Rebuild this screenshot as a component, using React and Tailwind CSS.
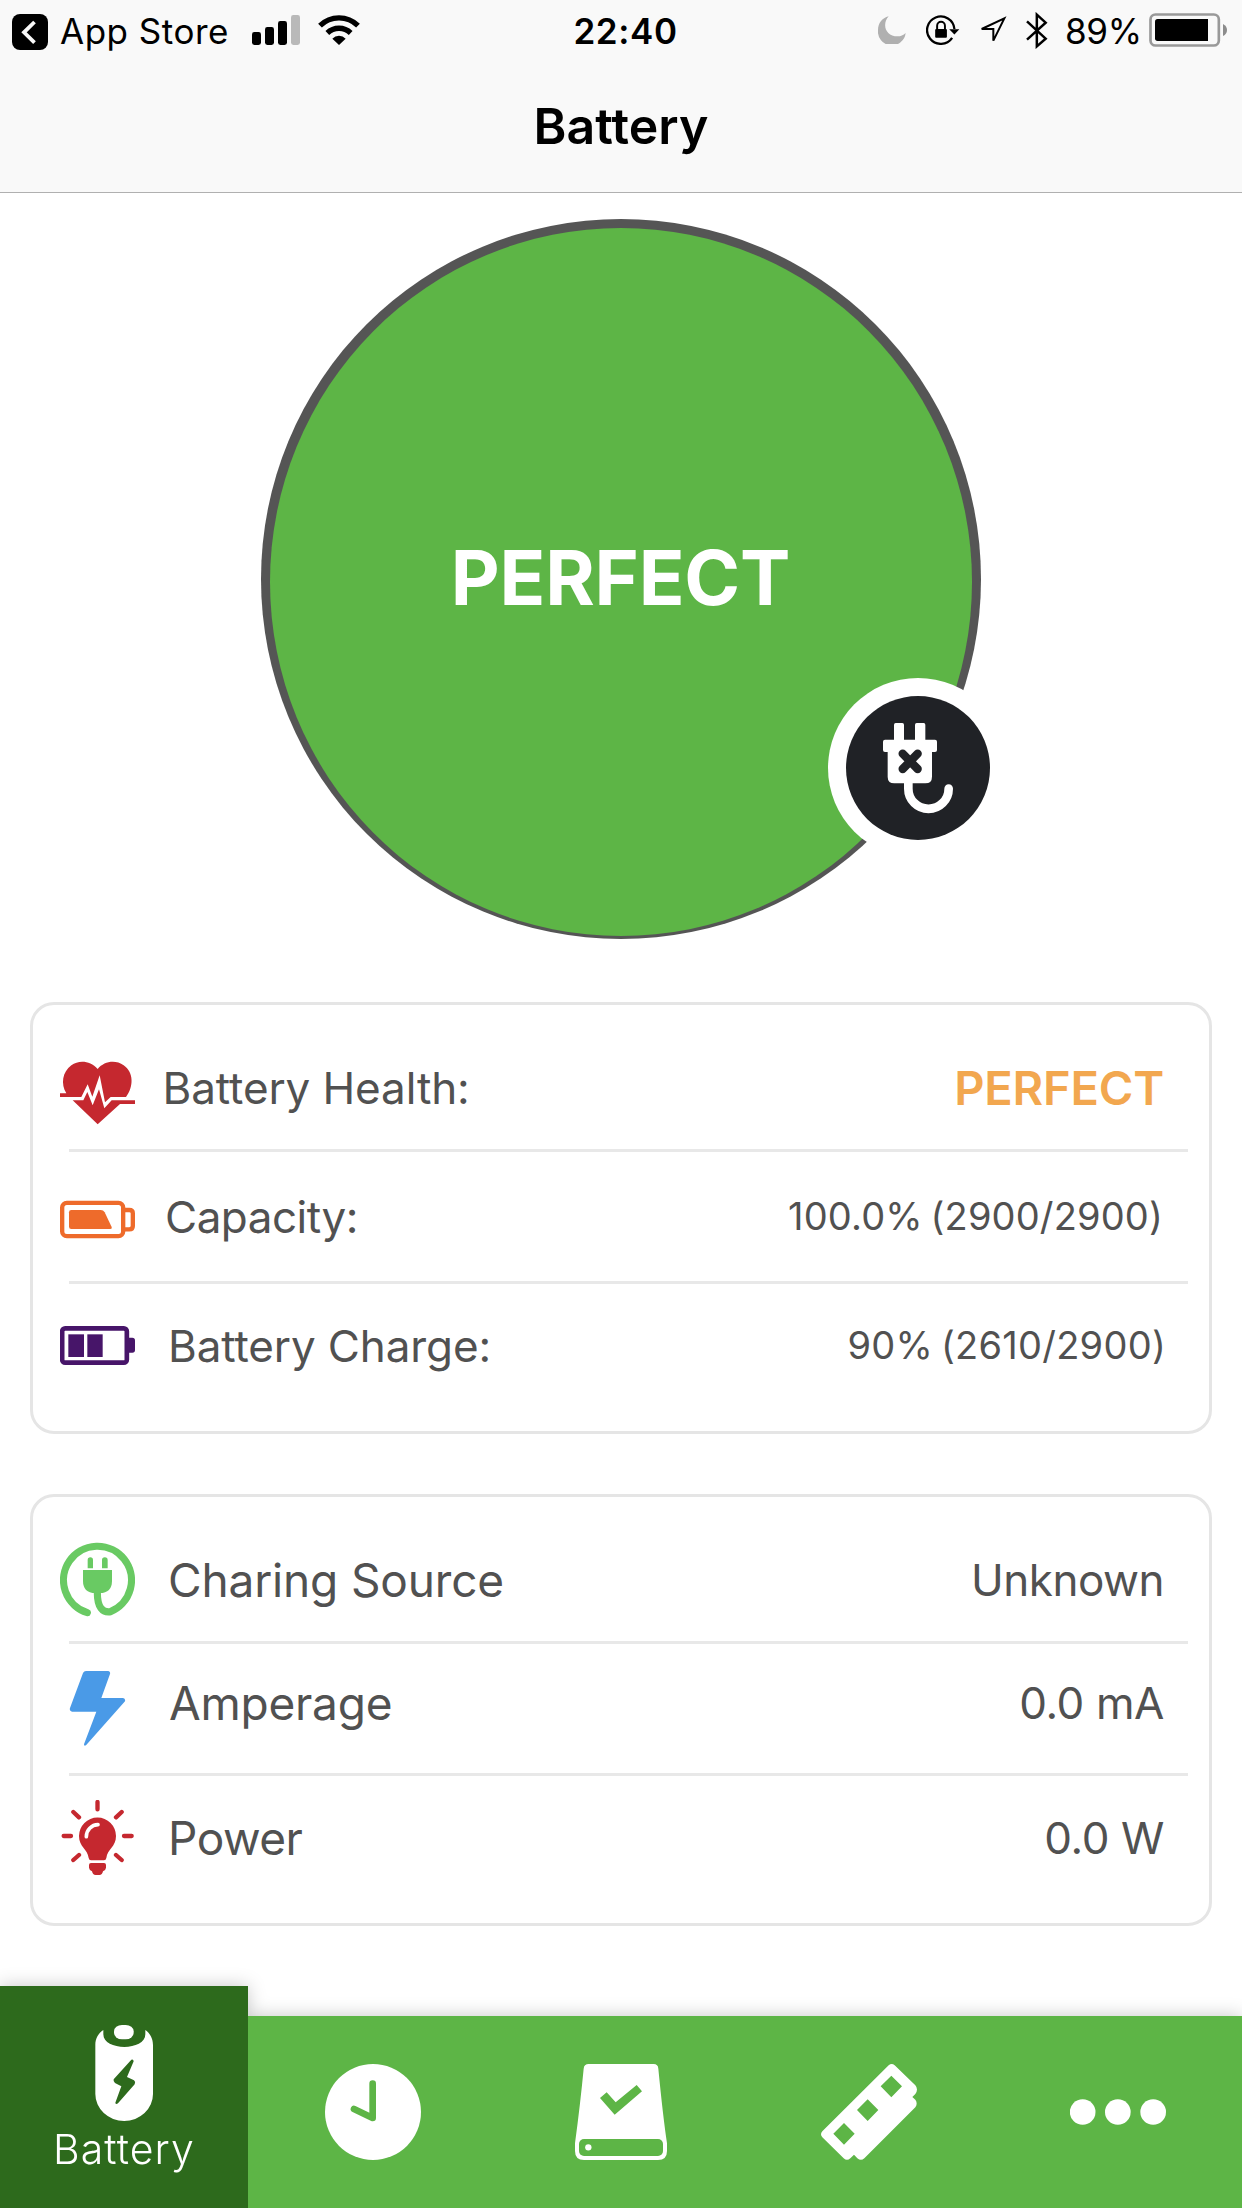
function BackBadge() {
  return (
    <svg className="ml-3 mt-[14px] h-9 w-9" viewBox="0 0 36 36">
      <rect width="36" height="36" rx="8" fill="#000" />
      <path d="M22.5 8 L12 18.3 L22.5 28.6" fill="none" stroke="#f9f9f9" strokeWidth="3.8" />
    </svg>
  );
}

function Signal() {
  return (
    <svg className="mt-[15px] h-[30px] w-12" viewBox="0 0 48 30">
      <rect x="0" y="17" width="9" height="13" rx="2.4" />
      <rect x="13" y="12" width="9" height="18" rx="2.4" />
      <rect x="26" y="6" width="9" height="24" rx="2.4" />
      <rect x="39" y="0" width="9" height="30" rx="2.4" fill="#b9b9b9" />
    </svg>
  );
}

function Wifi() {
  return (
    <svg className="mt-[15px] h-[30px] w-[42px]" viewBox="954 45 126 90">
      <g fill="none" stroke="#000" strokeWidth="16">
        <path d="M960 77 A81 81 0 0 1 1074 77" />
        <path d="M982 99 A50 50 0 0 1 1052 99" />
      </g>
      <path d="M1017 135 L997 116 A28 28 0 0 1 1037 116Z" />
    </svg>
  );
}

function Moon() {
  return (
    <svg className="mt-[15.5px] h-7 w-7" viewBox="176 47 84 84">
      <path d="M208 48 C188 53 176 69 176 89 A41 41 0 0 0 259 98 C252 105 244 108 235 108 C198 108 187 72 208 48Z" fill="#b0b0b0" />
    </svg>
  );
}

function RotationLock() {
  return (
    <svg className="mt-[15px] h-[30px] w-[34px]" viewBox="318 44 102 92">
      <path d="M397 114 A42 42 0 1 1 404 87" fill="none" stroke="#000" strokeWidth="7" />
      <path d="M388 88 H419 L404 104Z" />
      <rect x="345" y="87" width="36" height="27" rx="3" />
      <path d="M351 90 V77 a12 12 0 0 1 24 0 V90" fill="none" stroke="#000" strokeWidth="6" />
    </svg>
  );
}

function LocationArrow() {
  return (
    <svg className="mt-[15.5px] h-[30px] w-[30px]" viewBox="476 47 90 90">
      <path d="M558 54 L525 121 V86 H490Z" fill="none" stroke="#000" strokeWidth="6" />
    </svg>
  );
}

function Bluetooth() {
  return (
    <svg className="mt-3 h-[37px] w-[22px]" viewBox="617 36 66 111">
      <path d="M620 64 L676 116 L649.500 139 V44 L676 68 L620 119" fill="none" stroke="#000" strokeWidth="7.500" />
    </svg>
  );
}

function BatteryStatus() {
  return (
    <svg className="mt-[13px] h-[34px] w-[78px]" viewBox="987 39 234 102">
      <rect x="991.500" y="43.500" width="205" height="93" rx="15" fill="none" stroke="#999" strokeWidth="8" />
      <path d="M1013 57 H1164 V123 H1013 Q1005 123 1005 115 V65 Q1005 57 1013 57Z" />
      <path d="M1209 72 q12 6 12 18 t-12 18Z" fill="#8c8c8c" />
    </svg>
  );
}

function UnpluggedIcon() {
  return (
    <svg className="h-36 w-36" viewBox="138 138 432 432">
      <circle cx="354" cy="354" r="216" fill="#202226" />
      <g fill="#fff">
        <rect x="282" y="219" width="30" height="60" rx="5" />
        <rect x="345" y="219" width="31" height="60" rx="5" />
        <rect x="249" y="269" width="162" height="37" rx="6" />
        <path d="M263 296 H396 V380 Q396 400 376 400 H283 Q263 400 263 380Z" />
      </g>
      <path d="M325 390 V416 A60.500 60.500 0 0 0 446 416" fill="none" stroke="#fff" strokeWidth="26" strokeLinecap="round" />
      <path d="M308 311 L353 357 M353 311 L308 357" stroke="#202226" strokeWidth="25" strokeLinecap="round" />
    </svg>
  );
}

function HeartPulse({ className }) {
  return (
    <svg className={className} viewBox="120 195 225 225" fill="#c5282f">
      <path d="M233 237 C211 212 177 209 154 226 C127 246 122 282 139 310 H120 V321 H184 L203 283 L217 320 L239 256 L255 337 L272 321 H318 C341 291 342 247 311 226 C286 208 252 214 233 237Z" />
      <path d="M158 331 H190 L202 306 L218 346 L237 298 L253 355 L275 331 H345 V342 H300 L233 403Z" />
    </svg>
  );
}

function CapacityIcon({ className }) {
  return (
    <svg className={className} viewBox="120 576 225 225">
      <g fill="none" stroke="#ee6b2b" strokeWidth="13">
        <rect x="126.500" y="638.500" width="183" height="100" rx="14" />
        <path d="M310 660 H328 Q338.500 660 338.500 670 V708 Q338.500 718 328 718 H310" />
      </g>
      <path d="M154 660 H242 Q250 660 254 667 L275 711 Q277 717 271 717 H154 Q147 717 147 710 V667 Q147 660 154 660Z" fill="#ee6b2b" />
    </svg>
  );
}

function ChargeIcon({ className }) {
  return (
    <svg className={className} viewBox="120 954 225 225" fill="#471569">
      <rect x="126.500" y="1015" width="194" height="103" rx="9" fill="none" stroke="#471569" strokeWidth="14" />
      <rect x="145" y="1033" width="47" height="68" />
      <rect x="202" y="1033" width="46" height="68" />
      <path d="M324 1043 H337 Q345 1043 345 1051 V1080 Q345 1088 337 1088 H324Z" />
    </svg>
  );
}

function SourceIcon({ className }) {
  return (
    <svg className={className} viewBox="120 186 225 225" fill="#69ca63">
      <path d="M202 398 A102 102 0 1 1 270 395.500 C248 398 232 382 232 338" fill="none" stroke="#69ca63" strokeWidth="21.500" strokeLinecap="round" />
      <path d="M203 265 V240 a8 8 0 0 1 16 0 V265Z M246 265 V240 a8.500 8 0 0 1 17 0 V265Z" />
      <path d="M189 270 H276 V302 Q276 339 239 339 H226 Q189 339 189 302Z" />
    </svg>
  );
}

function BoltIcon({ className }) {
  return (
    <svg className={className} viewBox="120 573 225 225">
      <path d="M198 573 H265 Q272 575 270 582 L244 654 H309 Q317 656 315 664 L198 796 Q192 800 192 793 L229 695 H156 Q147 693 150 684 L189 579 Q192 573 198 573Z" fill="#4a9ae7" />
    </svg>
  );
}

function BulbIcon({ className }) {
  return (
    <svg className={className} viewBox="120 960 225 225" fill="#c5282f">
      <g stroke="#c5282f" strokeWidth="13" strokeLinecap="round">
        <path d="M232.500 966 V988 M131 1068 H153 M312 1068 H335 M160 996 L177 1012 M305 996 L288 1012 M160 1140 L177 1125 M305 1140 L288 1125" />
      </g>
      <path d="M177 1068 A55.500 55.500 0 0 1 288 1068 C288 1101 262 1107 259 1134 Q258 1141 252 1141 H213 Q207 1141 206 1134 C203 1107 177 1101 177 1068Z" />
      <path d="M199 1070 A36 36 0 0 1 234 1034" fill="none" stroke="#fff" strokeWidth="11" strokeLinecap="round" />
      <path d="M213 1149 H252 Q258 1149 258 1155 V1163 Q257 1171 249 1174 Q247 1185 238 1185 H227 Q218 1185 216 1174 Q208 1171 207 1163 V1155 Q207 1149 213 1149Z" />
    </svg>
  );
}

function Row({ icon, label, value, last }) {
  return (
    <>
      <div className={"flex items-start pl-[27px] " + (last ? "h-[147px]" : label.rowHeight)}>
        {icon}
        <span className={"whitespace-nowrap leading-[60px] text-[#515151] " + label.className}>{label.text}</span>
        <span className={"ml-auto whitespace-nowrap leading-[60px] " + value.className}>{value.text}</span>
      </div>
      {!last && <div className="ml-9 mr-[21px] h-[3px] bg-[#e8e8e8]" />}
    </>
  );
}

function Card({ children, className }) {
  return <section className={"mx-[30px] h-[432px] rounded-[24px] border-[3px] border-[#e5e5e5] bg-white " + className}>{children}</section>;
}

function Tab({ children }) {
  return <div className="flex h-48 flex-1 items-center justify-center bg-[#5db546]">{children}</div>;
}

export default function App() {
  return (
    <div className="flex h-[2208px] w-[1242px] flex-col overflow-hidden bg-white font-['Inter','Liberation_Sans',sans-serif]">
      <header className="h-[193px] border-b border-[#b0b0b0] bg-[#f9f9f9] text-black">
        <div className="grid h-[63px] grid-cols-[1fr_auto_1fr] items-start">
          <div className="flex items-start">
            <BackBadge />
            <span className="ml-[12px] w-[192px] whitespace-nowrap text-[35px] leading-[63px] tracking-[0.5px]">App Store</span>
            <Signal />
            <div className="ml-[18px] flex">
              <Wifi />
            </div>
          </div>
          <span className="mr-[-9px] text-[35px] font-semibold leading-[63px] tracking-[0.6px]">22:40</span>
          <div className="flex items-start justify-end pr-[15px]">
            <Moon />
            <div className="ml-[20px] flex"><RotationLock /></div>
            <div className="ml-[17px] flex"><LocationArrow /></div>
            <div className="ml-[19px] flex"><Bluetooth /></div>
            <span className="ml-[17px] mr-[7px] text-[35px] leading-[63px] tracking-[-0.2px]">89%</span>
            <BatteryStatus />
          </div>
        </div>
        <h1 className="text-center text-[50px] font-semibold leading-[126px] tracking-[0.1px]">Battery</h1>
      </header>

      <main className="flex flex-1 flex-col pt-[26px]">
        <div className="relative mx-auto flex h-[720px] w-[720px] shrink-0 justify-center rounded-full bg-[#555555] pt-[9px]">
          <div className="flex h-[708px] w-[702px] items-center justify-center rounded-[50%] bg-[#5db546]">
            <span className="mb-[9px] mr-px text-[75.5px] font-bold leading-[113px] tracking-[-0.2px] text-white">PERFECT</span>
          </div>
          <div className="absolute left-[567px] top-[459px] rounded-full bg-white p-[18px]">
            <UnpluggedIcon />
          </div>
        </div>

        <Card className="mt-[63px]">
          <Row
            icon={<HeartPulse className="mt-[50px] h-[75px] w-[75px]" />}
            label={{ text: "Battery Health:", rowHeight: "h-[144px]", className: "ml-[27.5px] mt-[53px] text-[44px] tracking-[-0.1px]" }}
            value={{ text: "PERFECT", className: "mr-[45px] mt-[53px] text-[47px] font-semibold tracking-[-0.2px] text-[#f2a74f]" }}
          />
          <Row
            icon={<CapacityIcon className="mt-[30px] h-[75px] w-[75px]" />}
            label={{ text: "Capacity:", rowHeight: "h-[129px]", className: "ml-[30px] mt-[35px] text-[44px] tracking-[-0.5px]" }}
            value={{ text: "100.0% (2900/2900)", className: "mr-[46px] mt-[34px] text-[38px] tracking-[0.15px] [word-spacing:-3px] text-[#515151]" }}
          />
          <Row
            last
            icon={<ChargeIcon className="mt-[24px] h-[75px] w-[75px]" />}
            label={{ text: "Battery Charge:", className: "ml-[33px] mt-[32px] text-[44px] tracking-[-0.12px]" }}
            value={{ text: "90% (2610/2900)", className: "mr-[43px] mt-[31px] text-[38px] tracking-[0.25px] [word-spacing:-3px] text-[#515151]" }}
          />
        </Card>

        <Card className="mt-[60px]">
          <Row
            icon={<SourceIcon className="mt-[45px] h-[75px] w-[75px]" />}
            label={{ text: "Charing Source", rowHeight: "h-[144px]", className: "ml-[33px] mt-[53px] text-[46px] tracking-[-0.15px]" }}
            value={{ text: "Unknown", className: "mr-[45px] mt-[53px] text-[44px] tracking-[-0.5px] text-[#515151]" }}
          />
          <Row
            icon={<BoltIcon className="mt-[27px] h-[75px] w-[75px]" />}
            label={{ text: "Amperage", rowHeight: "h-[129px]", className: "ml-[34px] mt-[29px] text-[46px] tracking-[-0.25px]" }}
            value={{ text: "0.0 mA", className: "mr-[45px] mt-[29px] text-[44px] tracking-[-0.4px] text-[#515151]" }}
          />
          <Row
            last
            icon={<BulbIcon className="mt-[24px] h-[75px] w-[75px]" />}
            label={{ text: "Power", className: "ml-[33px] mt-[32px] text-[46px] tracking-[-0.5px]" }}
            value={{ text: "0.0 W", className: "mr-[45px] mt-[32px] text-[44px] tracking-[-0.4px] text-[#515151]" }}
          />
        </Card>
      </main>

      <nav className="flex h-[222px] items-end drop-shadow-[0_0_9px_rgba(0,0,0,0.22)]">
        <div className="flex h-[222px] w-[248px] flex-col items-center bg-[#2d6a1c] pt-[39px]">
          <svg className="h-24 w-24" viewBox="228 165 288 288" fill="#fff">
            <path d="M310 180 C295 190 286 205 286 225 V372 a86.500 81 0 0 0 173 0 V225 C459 205 450 190 436 180 V193 C436 218 405 231 373 231 S310 218 310 193Z" />
            <rect x="342" y="165" width="59" height="43" rx="24" ry="19" />
            <path d="M394 269 L341 328 Q339 335 345 339 L364 349 L346 398 Q347 405 354 400 L404 343 Q408 336 402 331 L381 321 L401 274 Q400 266 394 269Z" fill="#2d6a1c" />
          </svg>
          <span className="text-[41px] font-[260] leading-[56px] tracking-[1.1px] text-white">Battery</span>
        </div>
        <Tab>
          <svg className="ml-px h-24 w-24" viewBox="975 282 288 288">
            <circle cx="1119" cy="426" r="144" fill="#fff" />
            <path d="M1118 341 V444 L1062 417" fill="none" stroke="#5db546" strokeWidth="20" strokeLinecap="round" strokeLinejoin="round" />
          </svg>
        </Tab>
        <Tab>
          <svg className="h-24 w-24" viewBox="99 282 288 288" fill="#fff">
            <path d="M131 296 Q132 282 146 282 H341 Q354 282 355 296 Q369 440 381 520 V543 Q381 570 354 570 H132 Q105 570 105 543 V520 Q121 400 131 296Z" />
            <path d="M180 384 L200 367 L227 397 L290 345 L306 364 L224 434Z" fill="#5db546" />
            <rect x="117" y="507" width="252" height="51" rx="15" fill="#5db546" />
            <circle cx="145" cy="532" r="9.500" />
          </svg>
        </Tab>
        <Tab>
          <svg className="h-24 w-24" viewBox="843 282 288 288" fill="#fff">
            <path d="M1046 286 Q1055 278 1064 286 L1126 346 Q1136 358 1126 372 L1117 381 L1126 389 Q1134 400 1126 412 L973 565 Q963 574 952 565 L942 554 L931 565 Q921 574 911 565 L847 502 Q839 493 847 484Z" />
            <path d="M1054 317 l32 32 l-32 33 l-32 -33Z M983 388 l32 32 l-32 33 l-32 -33Z M912 459 l32 32 l-32 33 l-32 -33Z" fill="#5db546" />
          </svg>
        </Tab>
        <Tab>
          <svg className="h-24 w-24" viewBox="210 252 288 288" fill="#fff">
            <circle cx="248" cy="396" r="38.500" />
            <circle cx="353.500" cy="396" r="38.500" />
            <circle cx="459.500" cy="396" r="38.500" />
          </svg>
        </Tab>
      </nav>
    </div>
  );
}
